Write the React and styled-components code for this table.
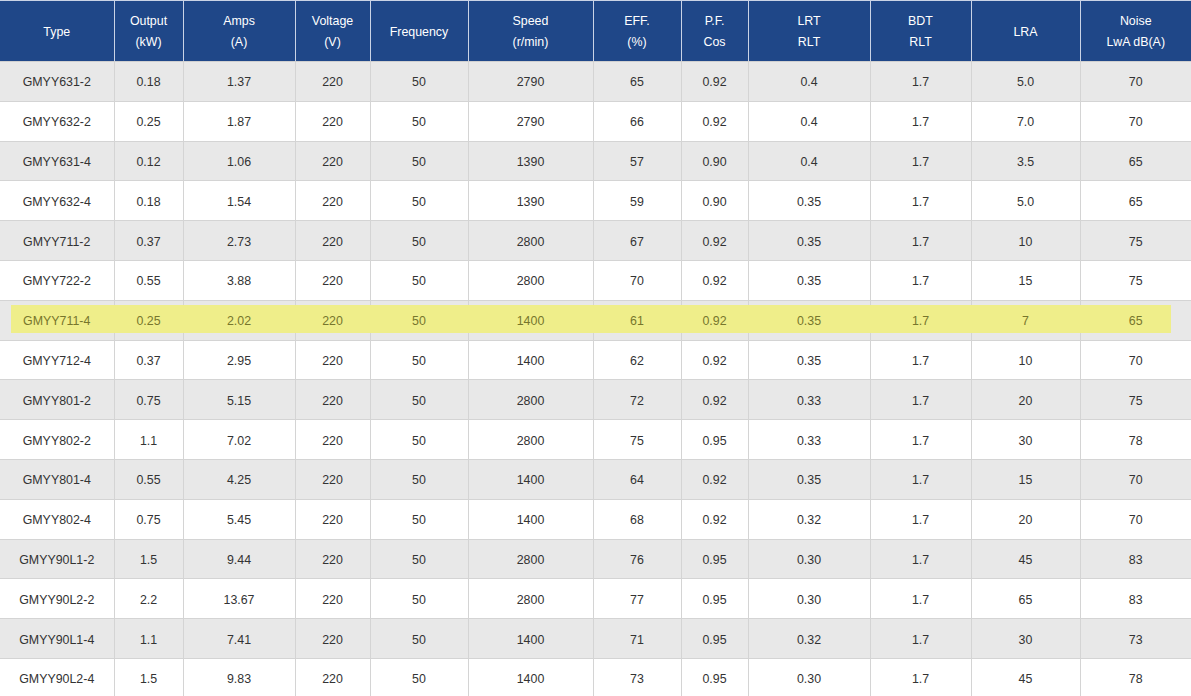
import React from "react";
import styled, { createGlobalStyle } from "styled-components";

const Global = createGlobalStyle`
  html, body { margin: 0; padding: 0; background: #ffffff; }
  body { font-family: "Liberation Sans", Arial, sans-serif; }
`;

const Wrap = styled.div`
  position: relative;
  width: 1191px;
  overflow: hidden;
`;

const Table = styled.table`
  width: 1191px;
  border-collapse: collapse;
  table-layout: fixed;
  font-family: "Liberation Sans", Arial, sans-serif;
  font-size: 12.4px;
`;

const HeadRow = styled.tr`
  height: 61px;
  background: #1f4788;
`;

const Th = styled.th`
  color: #ffffff;
  font-weight: normal;
  line-height: 21px;
  text-align: center;
  vertical-align: middle;
  padding: 2px 4px 0;
  border-left: 1px solid #c9d3e6;
  border-top: 1px solid #c9d3e6;
  border-bottom: 1px solid #d0d0d0;
  &:first-child { border-left: none; }
`;

const Row = styled.tr`
  height: 39.8px;
  background: ${(p) => (p.$alt ? "#e8e8e8" : "#ffffff")};
  color: ${(p) => (p.$marked ? "#77762c" : "#333333")};
`;

const Td = styled.td`
  text-align: center;
  vertical-align: middle;
  padding: 2px 4px 0;
  border: 1px solid #d4d4d4;
  &:first-child { border-left: none; }
  &:last-child { border-right: none; }
`;

const CellText = styled.span`
  position: relative;
  z-index: 1;
`;

const Highlight = styled.div`
  position: absolute;
  z-index: 0;
  left: 11px;
  top: 305px;
  width: 1160px;
  height: 28px;
  background: #efee8a;
  pointer-events: none;
`;

const widths = [114, 69, 112, 75, 98, 125, 88, 67, 122, 101, 109, 111];

const headers = [
  ["Type"],
  ["Output", "(kW)"],
  ["Amps", "(A)"],
  ["Voltage", "(V)"],
  ["Frequency"],
  ["Speed", "(r/min)"],
  ["EFF.", "(%)"],
  ["P.F.", "Cos"],
  ["LRT", "RLT"],
  ["BDT", "RLT"],
  ["LRA"],
  ["Noise", "LwA dB(A)"],
];

const rows = [
  ["GMYY631-2", "0.18", "1.37", "220", "50", "2790", "65", "0.92", "0.4", "1.7", "5.0", "70"],
  ["GMYY632-2", "0.25", "1.87", "220", "50", "2790", "66", "0.92", "0.4", "1.7", "7.0", "70"],
  ["GMYY631-4", "0.12", "1.06", "220", "50", "1390", "57", "0.90", "0.4", "1.7", "3.5", "65"],
  ["GMYY632-4", "0.18", "1.54", "220", "50", "1390", "59", "0.90", "0.35", "1.7", "5.0", "65"],
  ["GMYY711-2", "0.37", "2.73", "220", "50", "2800", "67", "0.92", "0.35", "1.7", "10", "75"],
  ["GMYY722-2", "0.55", "3.88", "220", "50", "2800", "70", "0.92", "0.35", "1.7", "15", "75"],
  ["GMYY711-4", "0.25", "2.02", "220", "50", "1400", "61", "0.92", "0.35", "1.7", "7", "65"],
  ["GMYY712-4", "0.37", "2.95", "220", "50", "1400", "62", "0.92", "0.35", "1.7", "10", "70"],
  ["GMYY801-2", "0.75", "5.15", "220", "50", "2800", "72", "0.92", "0.33", "1.7", "20", "75"],
  ["GMYY802-2", "1.1", "7.02", "220", "50", "2800", "75", "0.95", "0.33", "1.7", "30", "78"],
  ["GMYY801-4", "0.55", "4.25", "220", "50", "1400", "64", "0.92", "0.35", "1.7", "15", "70"],
  ["GMYY802-4", "0.75", "5.45", "220", "50", "1400", "68", "0.92", "0.32", "1.7", "20", "70"],
  ["GMYY90L1-2", "1.5", "9.44", "220", "50", "2800", "76", "0.95", "0.30", "1.7", "45", "83"],
  ["GMYY90L2-2", "2.2", "13.67", "220", "50", "2800", "77", "0.95", "0.30", "1.7", "65", "83"],
  ["GMYY90L1-4", "1.1", "7.41", "220", "50", "1400", "71", "0.95", "0.32", "1.7", "30", "73"],
  ["GMYY90L2-4", "1.5", "9.83", "220", "50", "1400", "73", "0.95", "0.30", "1.7", "45", "78"],
];

const MARKED = 6;

export default function App() {
  return (
    <>
      <Global />
      <Wrap>
        <Table>
          <colgroup>
            {widths.map((w, i) => (
              <col key={i} style={{ width: w }} />
            ))}
          </colgroup>
          <thead>
            <HeadRow>
              {headers.map((h, i) => (
                <Th key={i}>
                  {h.map((line, j) => (
                    <React.Fragment key={j}>
                      {j > 0 && <br />}
                      {line}
                    </React.Fragment>
                  ))}
                </Th>
              ))}
            </HeadRow>
          </thead>
          <tbody>
            {rows.map((r, i) => (
              <Row key={i} $alt={i % 2 === 0} $marked={i === MARKED}>
                {r.map((c, j) => (
                  <Td key={j}>
                    <CellText>{c}</CellText>
                  </Td>
                ))}
              </Row>
            ))}
          </tbody>
        </Table>
        <Highlight />
      </Wrap>
    </>
  );
}
